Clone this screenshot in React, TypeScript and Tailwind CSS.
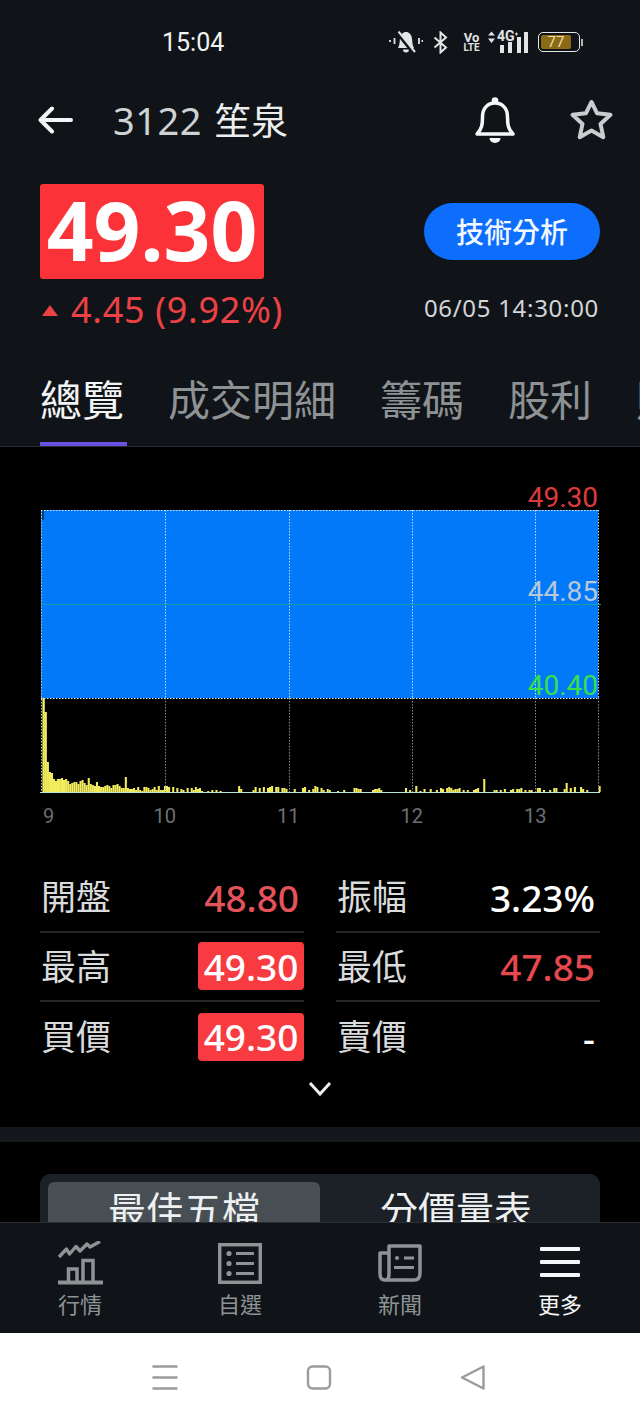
import React from 'react';

const volumes = [94, 80, 30, 20, 19, 13, 11, 13].concat(
  (
    'decdb89aa8bc97e876a65567647786' +
    '44f43342521554235262266' +
    '5050403204042534100102020100000000630000' +
    '025040504560550443000300045020365042032000100200004433000002' +
    '33420000000000040200601030030020430454233402020023400d000022' +
    '02030023033402022004402002044000390405005302000006'
  )
    .split('')
    .map((c) => parseInt(c, 36)),
);

const gridX = [125, 249, 372, 495, 558];

const Chart: React.FC = () => (
  <div className="relative w-[564px] h-[291px]">
    <svg width="564" height="291" viewBox="0 0 564 291" className="block">
      <rect x="1" y="5" width="557" height="188" fill="#0279f9" />
      <rect x="2" y="5" width="2" height="10" fill="#123a66" />
      {volumes.map((h, i) =>
        h > 0 ? (
          <rect
            key={i}
            x={2.4 + i * 2.06}
            y={287 - h}
            width={i < 8 ? 2.4 : 2.06}
            height={h}
            fill="#f2ec5e"
          />
        ) : null,
      )}
      {gridX.map((x) => (
        <g key={x}>
          <line x1={x + 0.5} y1="5" x2={x + 0.5} y2="193" stroke="#bcdcff" strokeDasharray="1.5 1.5" />
          <line x1={x + 0.5} y1="193" x2={x + 0.5} y2="287" stroke="#8b8b8b" strokeDasharray="1.5 1.5" />
        </g>
      ))}
      <line x1="1.5" y1="5" x2="1.5" y2="287" stroke="#9fd0c8" strokeDasharray="1.5 1.5" />
      <line x1="1" y1="5.5" x2="558" y2="5.5" stroke="#d6ebff" strokeDasharray="1.5 1.5" />
      <line x1="1" y1="193.5" x2="558" y2="193.5" stroke="#d6ebff" strokeDasharray="1.5 1.5" />
      <line x1="1" y1="99.5" x2="561" y2="99.5" stroke="#12a0a8" />
      <line x1="0" y1="287.5" x2="560" y2="287.5" stroke="#b8e4e0" />
    </svg>
    <span className="absolute right-[6px] top-[-23px] text-[28px] leading-[32px] text-[#dc3a3e] font-['Roboto',sans-serif]">
      49.30
    </span>
    <span className="absolute right-[6px] top-[71px] text-[28px] leading-[32px] text-[#b8c8d8] font-['Roboto',sans-serif]">
      44.85
    </span>
    <span className="absolute right-[6px] top-[165px] text-[28px] leading-[32px] text-[#35e04a] font-['Roboto',sans-serif]">
      40.40
    </span>
  </div>
);

const BellOff: React.FC = () => (
  <svg width="34" height="22" viewBox="0 0 34 22">
    <path d="M9 17 C11 13.5 10.5 10 11 7.5 C11.5 3.5 14 1 17 1 C20 1 22.5 3.5 23 7.5 C23.5 10.5 23 13.5 25 17 Z" fill="#e2e4e6" />
    <path d="M14 18.5 h6 a3 3 0 0 1 -6 0" fill="#e2e4e6" />
    <path d="M8 1 L24 21" stroke="#101418" strokeWidth="4" />
    <path d="M9.5 0.5 L26 21" stroke="#e2e4e6" strokeWidth="2" />
    <path d="M5.5 7 V13 M30 7 V13 M1 9 V11 M33.5 9 V11" stroke="#e2e4e6" strokeWidth="1.8" />
  </svg>
);

const StatusBar: React.FC = () => (
  <div className="flex items-center h-[84px] pl-[162px] pr-[57px]">
    <span className="text-[25px] leading-none text-[#f1f2f3] font-['Roboto',sans-serif]">15:04</span>
    <div className="ml-auto flex items-center text-[#e2e4e6] font-['Roboto',sans-serif]">
      <BellOff />
      <svg className="ml-[10px]" width="15" height="23" viewBox="0 0 15 23" fill="none" stroke="#e2e4e6" strokeWidth="2">
        <path d="M1.5 6.5 L13 16.5 L7.5 21.5 V1.5 L13 6.5 L1.5 16.5" />
      </svg>
      <div className="flex flex-col items-center w-[17px] ml-[15px] font-bold">
        <span className="text-[13px] h-[11px] leading-[11px]">Vo</span>
        <span className="text-[10px] h-[10px] leading-[10px]">LTE</span>
      </div>
      <div className="relative w-[41px] h-[22px] ml-[8px]">
        <svg width="41" height="22" viewBox="0 0 41 22" fill="#e2e4e6">
          <path d="M3.5 0.5 L7 4.5 H0 Z M3.5 12 L7 7.5 H0 Z" />
          <path d="M27 3 H30 M28.5 1.5 V4.5" stroke="#e2e4e6" strokeWidth="1" />
          <rect x="12" y="14" width="4" height="8" />
          <rect x="20" y="11" width="4" height="11" />
          <rect x="29" y="6" width="4" height="16" />
          <rect x="36" y="1" width="4" height="21" />
        </svg>
        <span className="absolute left-[9px] top-0 text-[14px] leading-[11px] font-bold">4G</span>
      </div>
      <div className="flex items-center ml-[9px]">
        <div className="flex items-center w-[42px] h-[20px] rounded-[5px] border-[1.5px] border-[#e6e6e6] p-[2px]">
          <div className="flex items-center justify-center w-[30px] h-full rounded-[2px] bg-[#8a6a14] text-[15px] leading-none text-[#f0dfa8]">
            77
          </div>
        </div>
        <div className="w-[2px] h-[7px] bg-[#b4b4b4] ml-[1px]" />
      </div>
    </div>
  </div>
);

const Header: React.FC = () => (
  <div className="flex items-center h-[72px] pl-[38px] pr-[26px]">
    <svg width="36" height="28" viewBox="0 0 36 28" fill="none" stroke="#f4f5f6" strokeWidth="4" strokeLinecap="round" strokeLinejoin="round">
      <path d="M33 14 H3 M14 2.5 L2.5 14 L14 25.5" />
    </svg>
    <span className="ml-[39px] text-[38px] leading-none tracking-[0.5px] text-[#cfd2d4]">3122</span>
    <span className="ml-[12px] text-[37px] leading-none text-[#eceded]">笙泉</span>
    <svg className="ml-auto" width="42" height="46" viewBox="0 0 42 46" fill="none" stroke="#f6f7f8" strokeWidth="3.5" strokeLinejoin="round">
      <path d="M3 37 C8 32 8.5 27 8.5 20 C8.5 11 14 6 21 6 C28 6 33.5 11 33.5 20 C33.5 27 34 32 39 37 Z" />
      <circle cx="21" cy="3.5" r="1.6" fill="#f6f7f8" />
      <path d="M15.5 41 h11 a5.5 5 0 0 1 -11 0" fill="#f6f7f8" stroke="none" />
    </svg>
    <svg className="ml-[53px]" width="45" height="43" viewBox="0 0 45 43" fill="none" stroke="#c9cdd0" strokeWidth="4" strokeLinejoin="round">
      <polygon points="22.5,3 28.1,14.3 41.5,15.8 31.5,24.9 34.3,38.2 22.5,31.5 10.7,38.2 13.5,24.9 3.5,15.8 16.9,14.3" />
    </svg>
  </div>
);

const Quote: React.FC = () => (
  <div className="flex justify-between pt-[28px] px-[40px] h-[179px]">
    <div className="flex flex-col">
      <div className="flex items-center justify-center w-[224px] h-[95px] pb-[6px] rounded-[3px] bg-[#fb3338] text-[82px] leading-none font-bold text-white">
        49.30
      </div>
      <div className="flex items-center mt-[8px] pl-[2px] h-[46px] text-[36px] leading-none tracking-[0.7px] text-[#ec4145]">
        <span className="w-0 h-0 border-x-[8px] border-x-transparent border-b-[11px] border-b-[#ec4145] mr-[13px] mt-[1px]" />
        4.45 (9.92%)
      </div>
    </div>
    <div className="flex flex-col items-end pt-[19px]">
      <div className="flex items-center justify-center w-[176px] h-[57px] rounded-full bg-[#0d6efd] text-[28px] leading-none font-medium text-[#f4f8ff]">
        技術分析
      </div>
      <span className="mt-[33px] mr-[1px] text-[24px] leading-[30px] tracking-[0.7px] text-[#d3d5d7]">06/05 14:30:00</span>
    </div>
  </div>
);

const Tabs: React.FC = () => (
  <div className="flex items-start gap-[44px] h-[112px] pt-[44px] pl-[40px] border-b border-[#2a2d31] overflow-hidden text-[42px] leading-[42px] whitespace-nowrap text-[#8d9295]">
    <div className="relative h-full text-[#f3f4f5]">
      總覽
      <div className="absolute bottom-[-1px] left-0 w-[87px] h-[5px] bg-[#6a51e3]" />
    </div>
    <div>成交明細</div>
    <div>籌碼</div>
    <div>股利</div>
    <div>財務</div>
  </div>
);

const ChartSection: React.FC = () => (
  <div className="pt-[58px] pl-[40px]">
    <Chart />
    <div className="flex h-[40px] items-center text-[20px] leading-none text-[#6c6f72] font-['Roboto',sans-serif]">
      <span className="w-[63px] pl-[3px]">9</span>
      <span className="w-[123.5px] text-center">10</span>
      <span className="w-[123.5px] text-center">11</span>
      <span className="w-[123.5px] text-center">12</span>
      <span className="w-[123.5px] text-center">13</span>
    </div>
  </div>
);

type Stat = { label: string; value: string; color?: string; badge?: boolean };

const stats: Stat[] = [
  { label: '開盤', value: '48.80', color: 'text-[#e5535a]' },
  { label: '振幅', value: '3.23%', color: 'text-white' },
  { label: '最高', value: '49.30', badge: true },
  { label: '最低', value: '47.85', color: 'text-[#e5484f]' },
  { label: '買價', value: '49.30', badge: true },
  { label: '賣價', value: '-', color: 'text-white' },
];

const StatRow: React.FC<Stat & { last: boolean }> = ({ label, value, color, badge, last }) => (
  <div className={`flex items-center justify-between h-[69.5px] ${last ? '' : 'border-b-2 border-[#25272a]'}`}>
    <span className="pl-[1px] text-[35px] leading-none text-[#d9dbdd]">{label}</span>
    {badge ? (
      <span className="flex items-center justify-center w-[106px] h-[48px] rounded-[4px] bg-[#f83a41] text-[37px] leading-none font-medium text-white">
        {value}
      </span>
    ) : (
      <span className={`pr-[5px] pt-[1px] text-[37px] leading-none font-medium ${color}`}>{value}</span>
    )}
  </div>
);

const Stats: React.FC = () => (
  <div className="grid grid-cols-2 gap-x-[32px] mt-[27px] mx-[40px]">
    {stats.map((s, i) => (
      <StatRow key={s.label} {...s} last={i >= 4} />
    ))}
  </div>
);

const NavItem: React.FC<{ label: string; active?: boolean; children: React.ReactNode }> = ({ label, active, children }) => (
  <div className={`flex flex-col items-center ${active ? 'text-[#f4f5f6]' : 'text-[#8e9396]'}`}>
    <div className="flex items-center justify-center h-[46px]">{children}</div>
    <span className="mt-[5px] text-[22px] leading-[26px]">{label}</span>
  </div>
);

const BottomNav: React.FC = () => (
  <div className="grid grid-cols-4 shrink-0 h-[111px] pt-[17px] bg-[#101418] border-t border-[#2b2f33]">
    <NavItem label="行情">
      <svg width="45" height="44" viewBox="0 0 45 44" fill="none" stroke="currentColor" strokeWidth="3.4">
        <path d="M1 16 L8.5 8 L11.5 13 L18 5.5 L22 10 L29 3 L32 6 L42 0.5" strokeLinejoin="round" />
        <path d="M10.5 41 V28 H19 V41 M25 41 V19.5 H35 V41" strokeWidth="3.5" />
        <path d="M0 41.5 H45" strokeWidth="4" />
      </svg>
    </NavItem>
    <NavItem label="自選">
      <svg width="44" height="41" viewBox="0 0 44 41" fill="none" stroke="currentColor" strokeWidth="3.5">
        <rect x="1.7" y="1.7" width="40.6" height="37.6" />
        <path d="M18 10.5 H36 M18 20.5 H36 M18 30.5 H36" strokeWidth="3" />
        <circle cx="11" cy="10.5" r="2.6" fill="currentColor" stroke="none" />
        <circle cx="11" cy="20.5" r="2.6" fill="currentColor" stroke="none" />
        <circle cx="11" cy="30.5" r="2.6" fill="currentColor" stroke="none" />
      </svg>
    </NavItem>
    <NavItem label="新聞">
      <svg width="44" height="38" viewBox="0 0 44 38" fill="none" stroke="currentColor" strokeWidth="3.5" strokeLinejoin="round">
        <path d="M11 30 V2 H42 V29 Q42 36 36 36 H7 Q2 36 2 30 V9 H11 V30 Q11 36 7 36" />
        <path d="M26 14 H36 M16 23.5 H36" strokeWidth="3" />
        <circle cx="19" cy="14" r="2" fill="currentColor" stroke="none" />
      </svg>
    </NavItem>
    <NavItem label="更多" active>
      <svg width="40" height="32" viewBox="0 0 40 32" fill="#f6f7f8">
        <rect y="0" width="40" height="4" rx="1" />
        <rect y="13" width="40" height="4" rx="1" />
        <rect y="26" width="40" height="4" rx="1" />
      </svg>
    </NavItem>
  </div>
);

const SystemBar: React.FC = () => (
  <div className="flex items-center justify-center gap-[128px] shrink-0 h-[89px] pr-[2px] bg-white">
    <svg width="26" height="25" viewBox="0 0 26 25" stroke="#999b9d" strokeWidth="2.4">
      <path d="M0.5 1.5 H25.5 M0.5 12.5 H25.5 M0.5 23.5 H25.5" />
    </svg>
    <svg width="26" height="25" viewBox="0 0 26 25" fill="none" stroke="#999b9d" strokeWidth="2.4">
      <rect x="2" y="1.5" width="22" height="22" rx="4.5" />
    </svg>
    <svg width="26" height="25" viewBox="0 0 26 25" fill="none" stroke="#999b9d" strokeWidth="2.4" strokeLinejoin="round">
      <path d="M23.5 1.5 L2 12.5 L23.5 23.5 Z" />
    </svg>
  </div>
);

export default function App() {
  return (
    <div className="flex flex-col w-[640px] h-[1422px] overflow-hidden bg-black font-['Noto_Sans','Noto_Sans_CJK_TC',sans-serif]">
      <div className="shrink-0 bg-[#101418]">
        <StatusBar />
        <Header />
        <Quote />
        <Tabs />
      </div>
      <div className="flex-1 min-h-0 overflow-hidden">
        <ChartSection />
        <Stats />
        <div className="flex justify-center mt-[9px]">
          <svg width="24" height="16" viewBox="0 0 24 16" fill="none" stroke="#eceded" strokeWidth="3">
            <path d="M2 2 L12 13 L22 2" />
          </svg>
        </div>
        <div className="mt-[30px] h-[15px] bg-[#14181c]" />
        <div className="flex mt-[32px] mx-[40px] h-[60px] pt-[8px] px-[8px] rounded-t-[10px] bg-[#1b2127] text-[38px] leading-[44px] text-[#eef0f1]">
          <div className="w-[272px] rounded-t-[6px] pt-[5px] text-center bg-[#474f55]">最佳五檔</div>
          <div className="flex-1 pt-[5px] text-center">分價量表</div>
        </div>
      </div>
      <BottomNav />
      <SystemBar />
    </div>
  );
}
